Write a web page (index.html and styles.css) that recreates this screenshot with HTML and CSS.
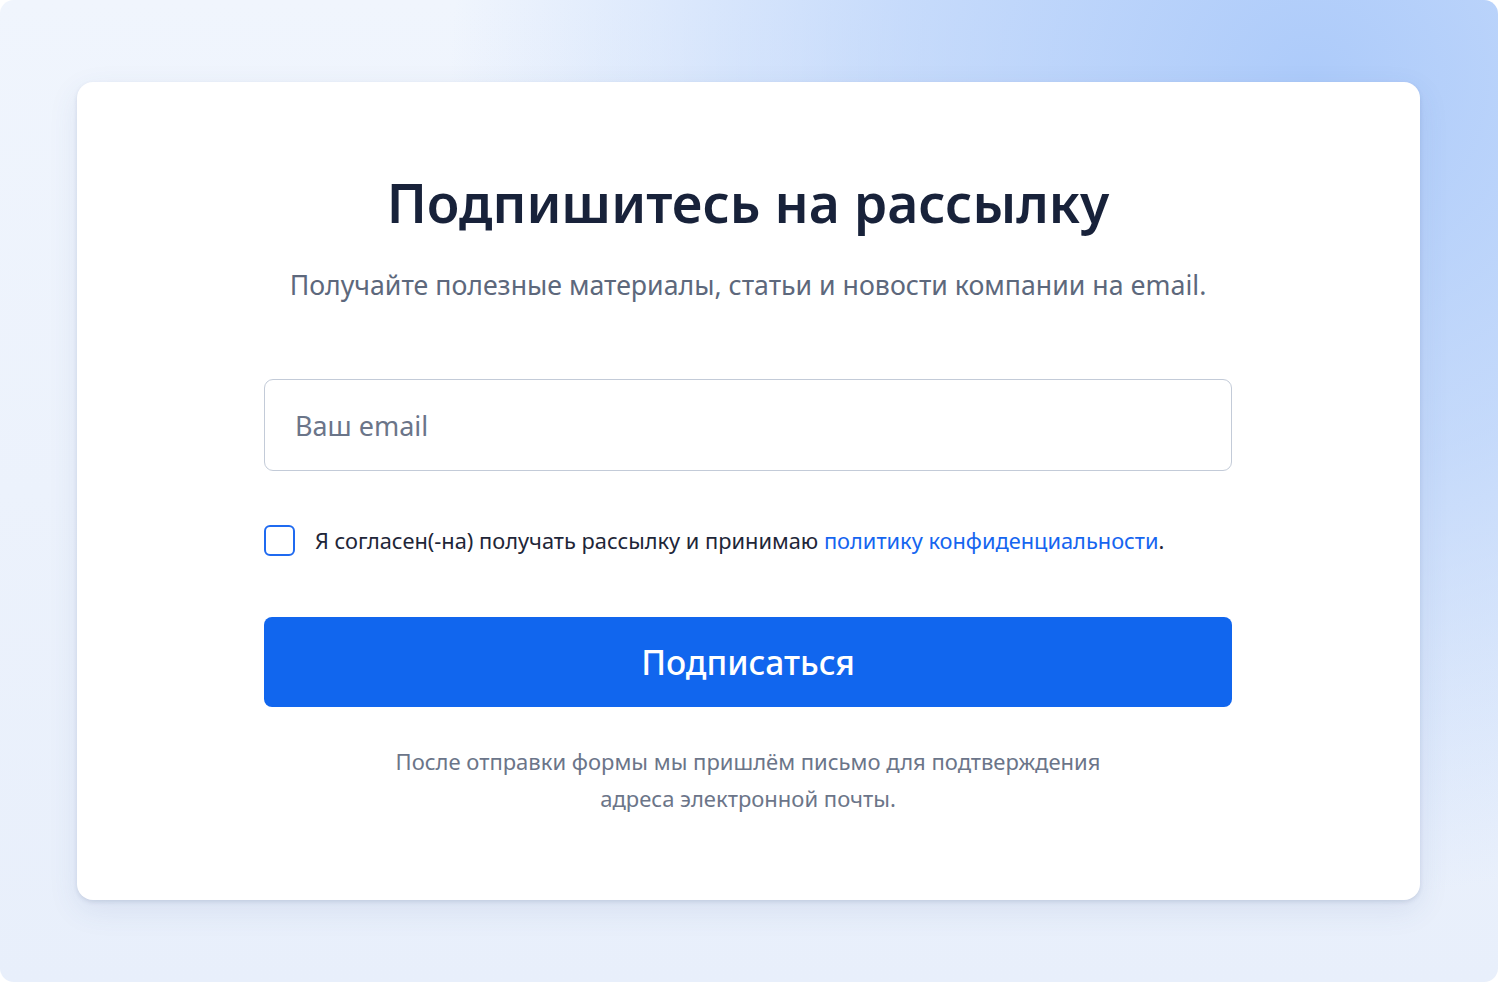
FILE: index.html
```html
<!DOCTYPE html>
<html lang="ru">
<head>
    <meta charset="UTF-8">
    <title>Подписка на рассылку</title>
    <link rel="stylesheet" href="styles.css">
</head>
<body>
    <div class="page">
        <div class="card">
            <h1>Подпишитесь на рассылку</h1>
            <p class="lead">Получайте полезные материалы, статьи и новости компании на email.</p>

            <form class="form" onsubmit="return false;">
                <input type="email" class="email-input" placeholder="Ваш email">

                <label class="agree">
                    <input type="checkbox" class="agree-box">
                    <span>Я согласен(-на) получать рассылку и принимаю <a href="#">политику конфиденциальности</a>.</span>
                </label>

                <button type="submit" class="submit-btn">Подписаться</button>
            </form>

            <p class="note">После отправки формы мы пришлём письмо для подтверждения<br>адреса электронной почты.</p>
        </div>
    </div>
</body>
</html>
```

FILE: styles.css
```css
* {
    box-sizing: border-box;
}

html, body {
    margin: 0;
    background-color: #ffffff;
}

body {
    font-family: "Noto Sans", "Open Sans", sans-serif;
}

.page {
    min-height: 100vh;
    padding: 82px 78px 82px 77px;
    border-radius: 14px;
    background-color: #eaf1fc;
    background-image:
        radial-gradient(ellipse 860px 820px at 1310px 80px, #adcbfa 0%, rgba(173, 203, 250, 0.62) 48%, rgba(173, 203, 250, 0) 100%),
        linear-gradient(180deg, #f0f5fd 0%, #e8effb 100%);
}

.card {
    width: 1343px;
    height: 818px;
    padding: 86px 188px 0 187px;
    display: flex;
    flex-direction: column;
    align-items: center;
    background-color: #ffffff;
    border-radius: 16px;
    box-shadow: 0 2px 4px rgba(60, 80, 120, 0.14), 0 10px 30px rgba(60, 90, 150, 0.10);
}

h1 {
    margin: 0;
    font-size: 53.5px;
    line-height: 70px;
    font-weight: 600;
    color: #18223a;
}

.lead {
    margin: 29px 0 0;
    font-size: 26.7px;
    line-height: 36px;
    color: #5d687c;
}

.form {
    width: 100%;
    margin-top: 76px;
    display: flex;
    flex-direction: column;
}

.email-input {
    width: 100%;
    height: 92px;
    padding: 0 30px;
    font-family: inherit;
    font-size: 27px;
    color: #18223a;
    background-color: #ffffff;
    border: 1.5px solid #c3cbd8;
    border-radius: 9px;
    outline: none;
}

.email-input::placeholder {
    color: #6b7589;
}

.agree {
    margin-top: 54px;
    display: flex;
    align-items: center;
    gap: 20px;
    font-size: 21.8px;
    line-height: 31px;
    color: #1e2638;
    cursor: pointer;
}

.agree-box {
    appearance: none;
    -webkit-appearance: none;
    margin: 0;
    width: 31px;
    height: 31px;
    flex: none;
    border: 2px solid #1f6af0;
    border-radius: 6px;
    background-color: #ffffff;
}

.agree a {
    color: #1565f0;
    text-decoration: none;
}

.submit-btn {
    margin-top: 61px;
    width: 100%;
    height: 90px;
    font-family: inherit;
    font-size: 33.5px;
    font-weight: 500;
    color: #ffffff;
    background-color: #1166ee;
    border: none;
    border-radius: 8px;
    cursor: pointer;
}

.note {
    margin: 36px 0 0;
    font-size: 22px;
    line-height: 37px;
    text-align: center;
    color: #6b7589;
}
```
